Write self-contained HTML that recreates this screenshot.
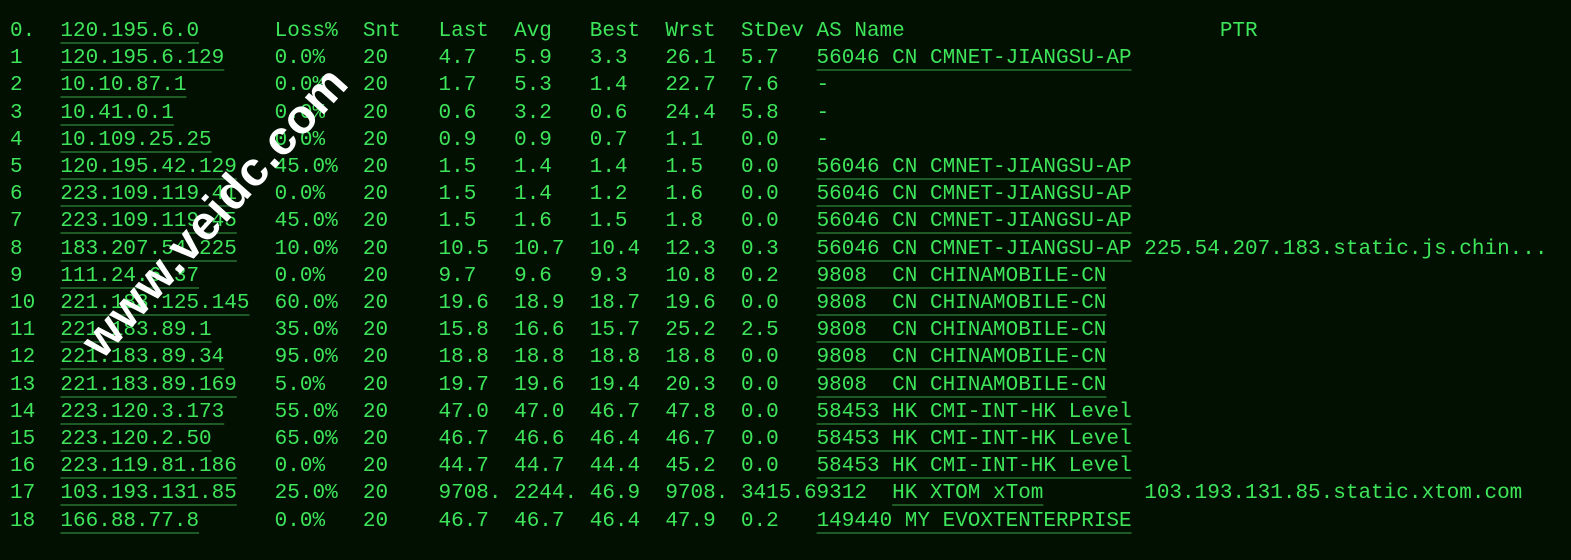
<!DOCTYPE html>
<html><head><meta charset="utf-8"><style>
html,body{margin:0;padding:0;background:#011001;width:1571px;height:560px;overflow:hidden}
pre{position:absolute;left:10px;top:18px;margin:0;font-family:"Liberation Mono",monospace;font-size:21px;line-height:27.2px;color:#3ee45a;letter-spacing:0}
u{text-decoration:underline;text-decoration-color:#1e5a24;text-decoration-thickness:2px;text-underline-offset:6px}
.wm{position:absolute;left:215px;top:212px;transform:translate(-50%,-50%) rotate(-48deg);font-family:"Liberation Sans",sans-serif;font-weight:bold;font-size:48px;color:#fff;white-space:nowrap;letter-spacing:1px}
</style></head><body>
<pre>0.  <u>120.195.6.0</u>      Loss%  Snt   Last  Avg   Best  Wrst  StDev AS Name                         PTR
1   <u>120.195.6.129</u>    0.0%   20    4.7   5.9   3.3   26.1  5.7   <u>56046 CN CMNET-JIANGSU-AP</u>
2   <u>10.10.87.1</u>       0.0%   20    1.7   5.3   1.4   22.7  7.6   -
3   <u>10.41.0.1</u>        0.0%   20    0.6   3.2   0.6   24.4  5.8   -
4   <u>10.109.25.25</u>     0.0%   20    0.9   0.9   0.7   1.1   0.0   -
5   <u>120.195.42.129</u>   45.0%  20    1.5   1.4   1.4   1.5   0.0   <u>56046 CN CMNET-JIANGSU-AP</u>
6   <u>223.109.119.41</u>   0.0%   20    1.5   1.4   1.2   1.6   0.0   <u>56046 CN CMNET-JIANGSU-AP</u>
7   <u>223.109.119.45</u>   45.0%  20    1.5   1.6   1.5   1.8   0.0   <u>56046 CN CMNET-JIANGSU-AP</u>
8   <u>183.207.54.225</u>   10.0%  20    10.5  10.7  10.4  12.3  0.3   <u>56046 CN CMNET-JIANGSU-AP</u> 225.54.207.183.static.js.chin...
9   <u>111.24.6.37</u>      0.0%   20    9.7   9.6   9.3   10.8  0.2   <u>9808  CN CHINAMOBILE-CN</u>
10  <u>221.183.125.145</u>  60.0%  20    19.6  18.9  18.7  19.6  0.0   <u>9808  CN CHINAMOBILE-CN</u>
11  <u>221.183.89.1</u>     35.0%  20    15.8  16.6  15.7  25.2  2.5   <u>9808  CN CHINAMOBILE-CN</u>
12  <u>221.183.89.34</u>    95.0%  20    18.8  18.8  18.8  18.8  0.0   <u>9808  CN CHINAMOBILE-CN</u>
13  <u>221.183.89.169</u>   5.0%   20    19.7  19.6  19.4  20.3  0.0   <u>9808  CN CHINAMOBILE-CN</u>
14  <u>223.120.3.173</u>    55.0%  20    47.0  47.0  46.7  47.8  0.0   <u>58453 HK CMI-INT-HK Level</u>
15  <u>223.120.2.50</u>     65.0%  20    46.7  46.6  46.4  46.7  0.0   <u>58453 HK CMI-INT-HK Level</u>
16  <u>223.119.81.186</u>   0.0%   20    44.7  44.7  44.4  45.2  0.0   <u>58453 HK CMI-INT-HK Level</u>
17  <u>103.193.131.85</u>   25.0%  20    9708. 2244. 46.9  9708. 3415.69312  <u>HK XTOM xTom</u>        103.193.131.85.static.xtom.com
18  <u>166.88.77.8</u>      0.0%   20    46.7  46.7  46.4  47.9  0.2   <u>149440 MY EVOXTENTERPRISE</u></pre>
<div class="wm">www.veidc.com</div>
</body></html>
